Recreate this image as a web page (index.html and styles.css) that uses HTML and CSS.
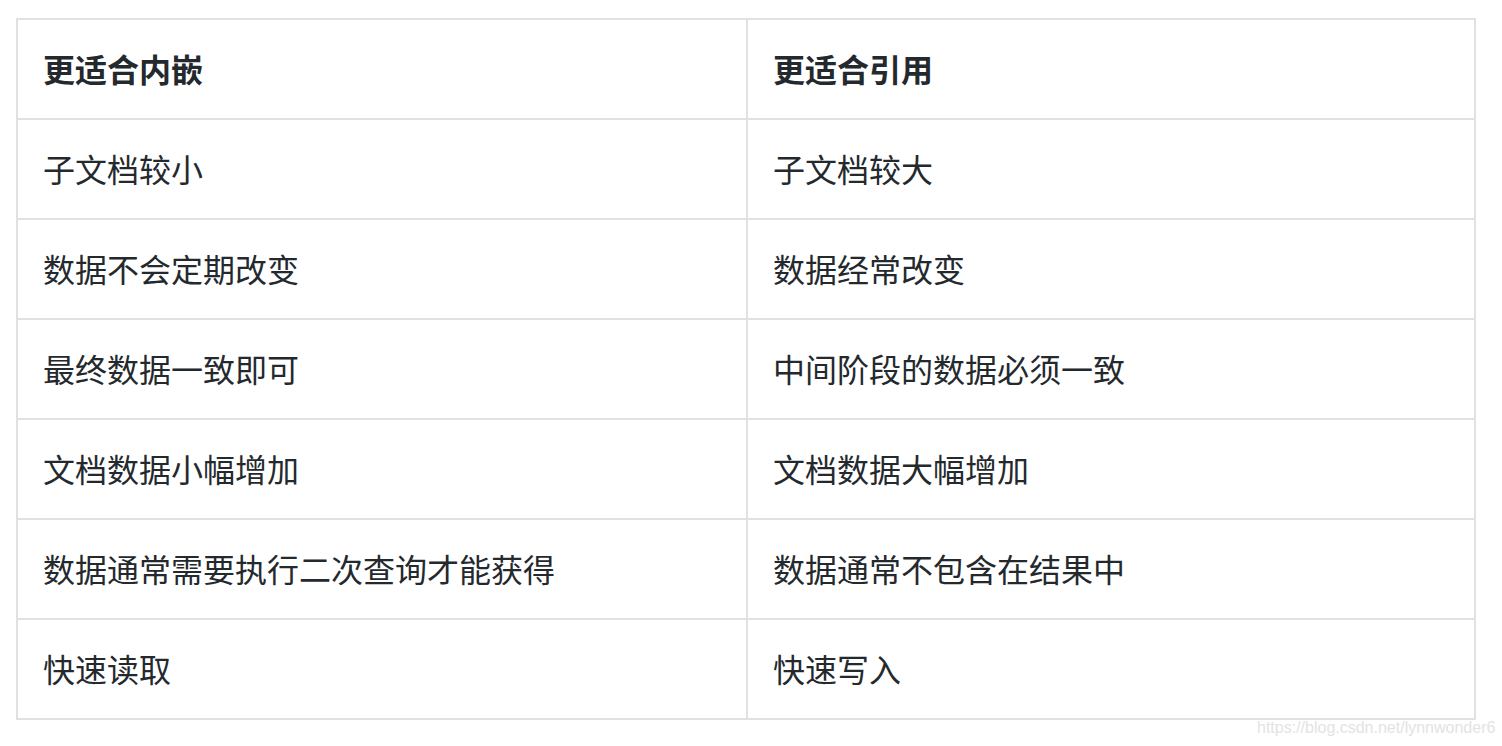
FILE: index.html
```html
<!DOCTYPE html>
<html lang="zh">
<head>
<meta charset="utf-8">
<link rel="stylesheet" href="styles.css">
</head>
<body>
<div class="page">
  <table class="grid">
    <thead>
      <tr><th>更适合内嵌</th><th>更适合引用</th></tr>
    </thead>
    <tbody>
      <tr><td>子文档较小</td><td>子文档较大</td></tr>
      <tr><td>数据不会定期改变</td><td>数据经常改变</td></tr>
      <tr><td>最终数据一致即可</td><td>中间阶段的数据必须一致</td></tr>
      <tr><td>文档数据小幅增加</td><td>文档数据大幅增加</td></tr>
      <tr><td>数据通常需要执行二次查询才能获得</td><td>数据通常不包含在结果中</td></tr>
      <tr><td>快速读取</td><td>快速写入</td></tr>
    </tbody>
  </table>
  <div class="watermark">https://blog.csdn.net/lynnwonder6</div>
</div>
</body>
</html>
```

FILE: styles.css
```css
html, body {
  margin: 0;
  padding: 0;
  background: #ffffff;
}
.page {
  position: relative;
  width: 1502px;
  height: 746px;
  padding: 18px 0 0 16px;
  box-sizing: border-box;
  overflow: hidden;
}
.grid {
  width: 1460px;
  border-collapse: collapse;
  table-layout: fixed;
  font-family: "Noto Sans CJK SC", "Noto Sans", sans-serif;
  font-size: 32px;
  color: #24292e;
}
.grid th, .grid td {
  border: 2px solid #dfe2e5;
  height: 100px;
  padding: 0 25px 3px;
  box-sizing: border-box;
  text-align: left;
  vertical-align: middle;
  line-height: 48px;
}
.grid th:first-child, .grid td:first-child {
  width: 730px;
}
.grid th {
  font-weight: 700;
}
.grid td {
  font-weight: 400;
}
.watermark {
  position: absolute;
  left: 1257px;
  top: 719px;
  font-family: "Liberation Sans", Arial, sans-serif;
  font-size: 16px;
  line-height: 18px;
  color: #e3e3e3;
  white-space: nowrap;
}
```
